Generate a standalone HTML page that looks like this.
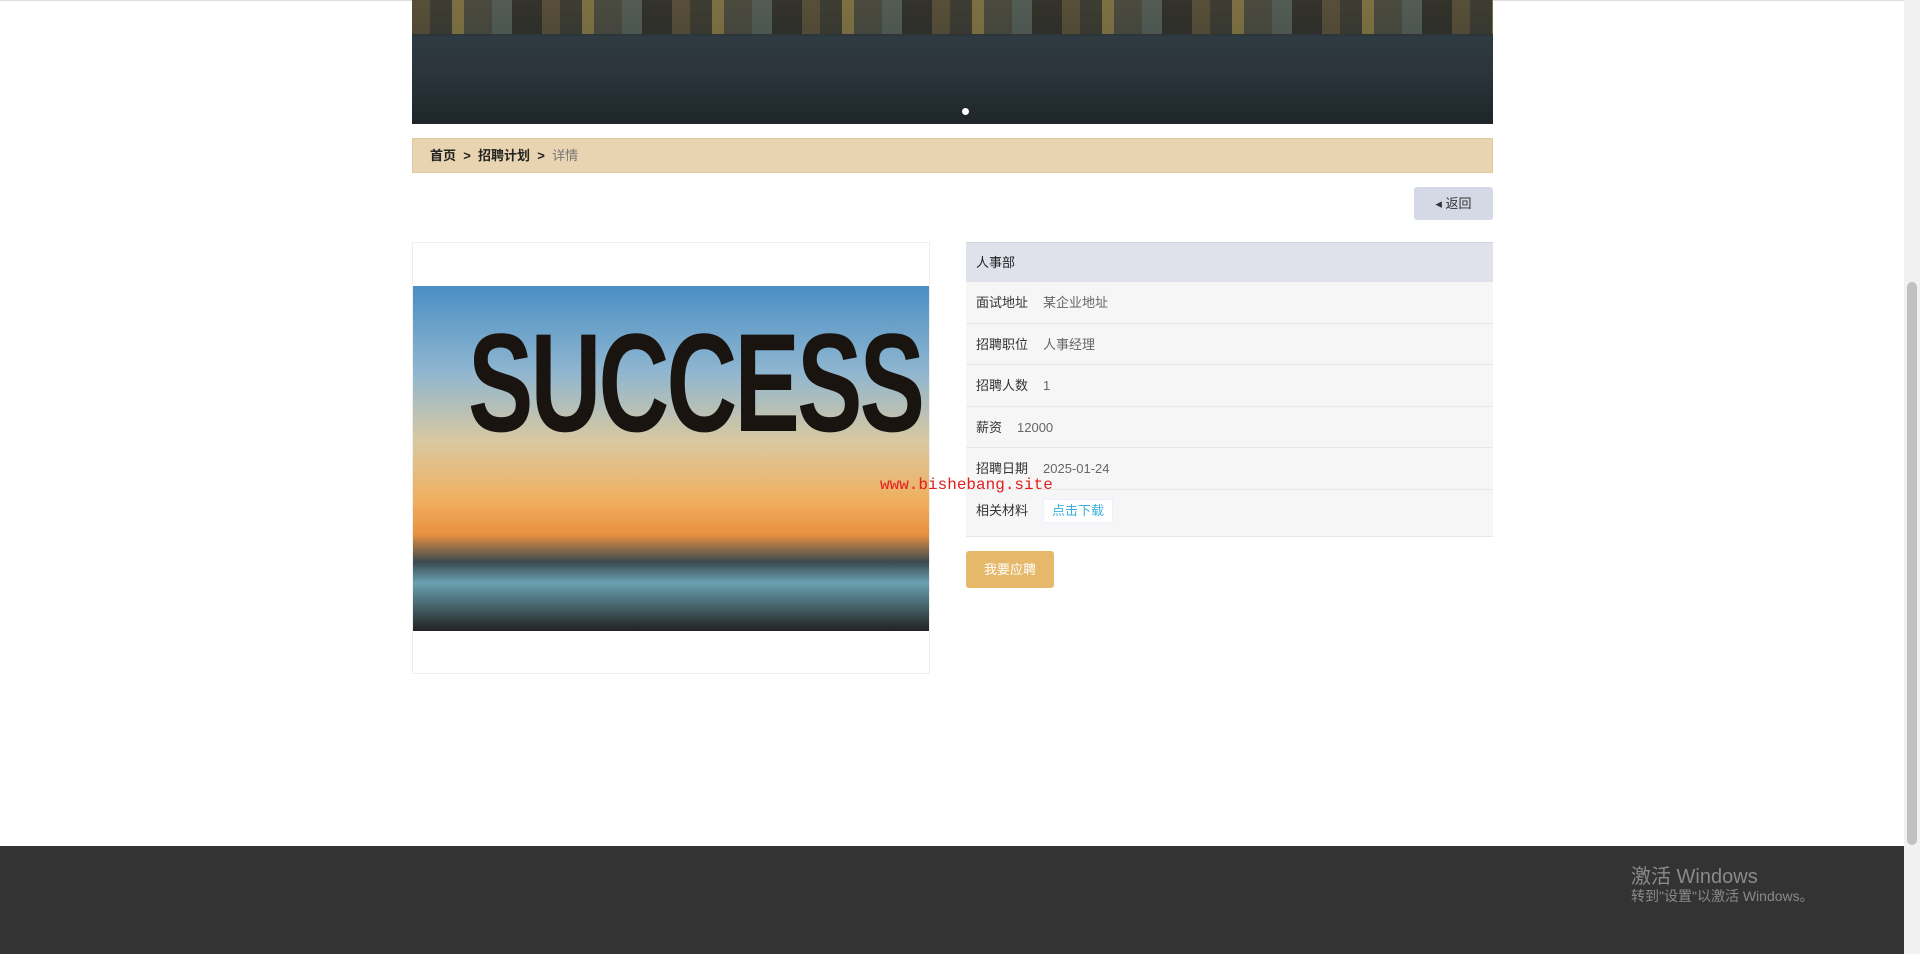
<!DOCTYPE html>
<html><head><meta charset="utf-8"><style>
*{margin:0;padding:0;box-sizing:border-box}
body{width:1920px;height:954px;overflow:hidden;background:#fff;font-family:"Liberation Sans","Noto Sans CJK SC",sans-serif;position:relative}
.abs{position:absolute}
.banner{left:412px;top:0;width:1081px;height:124px;background:linear-gradient(180deg,#4a4a3e 0,#3d3d33 12%,#2a3030 26%,#2f3b42 30%,#2a3439 60%,#1e262b 100%)}
.lights{left:412px;top:0;width:1081px;height:34px;background:repeating-linear-gradient(90deg,#5a5038 0 18px,#3a3a30 18px 40px,#8a7a45 40px 52px,#4b4b40 52px 80px,#55605a 80px 100px,#2e2e28 100px 130px);opacity:.8}
.dot{left:962px;top:108px;width:7px;height:7px;border-radius:50%;background:#fff}
.crumb{left:412px;top:138px;width:1081px;height:35px;background:#e9d4b1;border:1px solid #e0c89f;font-size:13px;line-height:34px;padding-left:17px;color:#222;font-weight:bold}
.crumb span.g{color:#777;font-weight:normal}
.back{left:1414px;top:187px;width:79px;height:33px;background:#d5d9e6;border-radius:3px;font-size:13px;color:#333;line-height:33px;text-align:center}
.card{left:412px;top:242px;width:518px;height:432px;border:1px solid #eee;background:#fff}
.img{left:413px;top:286px;width:516px;height:345px;overflow:hidden;background:linear-gradient(180deg,#4a8fc4 0,#8fb6d0 25%,#d9c8a0 45%,#f0b060 62%,#e89040 72%,#3a4a50 80%,#6aa0b0 86%,#222 100%)}
.succ{position:absolute;left:55px;top:22px;font-size:140px;line-height:150px;font-weight:bold;color:#1a1410;letter-spacing:-4px;font-family:"Liberation Sans",sans-serif;transform:scaleX(.7);transform-origin:left}
.tbl{left:966px;top:242px;width:527px}
.hd{height:40px;background:#dfe2ea;font-size:13px;line-height:40px;padding-left:10px;color:#222;border-top:1px solid #d0d4df}
.row{height:41.5px;background:#f6f6f6;border-bottom:1.5px solid #e8e8e8;font-size:13px;line-height:41px;padding-left:10px;color:#444}
.row b{font-weight:normal;color:#333;margin-right:15px}
.row i{font-style:normal;color:#666}
.dl{display:inline-block;background:#fff;border:1px solid #eef;color:#3ab0d8;font-size:13px;line-height:22px;padding:0 8px;vertical-align:middle}
.apply{left:966px;top:551px;width:88px;height:37px;background:#e6b86a;border-radius:3px;color:#fff;font-size:13px;line-height:37px;text-align:center}
.wm{left:880px;top:476px;color:#e02020;font-family:"Liberation Mono",monospace;font-size:16px}
.foot{left:0;top:846px;width:1904px;height:108px;background:#333}
.win{left:1631px;top:860px;color:#8a8a8a;font-size:20px}
.win2{left:1631px;top:886px;color:#8a8a8a;font-size:14px}
.sb{left:1904px;top:0;width:16px;height:954px;background:#f1f1f1}
.th{left:1907px;top:282px;width:10px;height:563px;background:#c1c1c1;border-radius:5px}
.topline{left:0;top:0;width:1904px;height:1px;background:#ddd}
</style></head><body>
<div class="abs topline"></div>
<div class="abs banner"></div>
<div class="abs lights"></div>
<div class="abs dot"></div>
<div class="abs crumb">首页 &nbsp;&gt;&nbsp; 招聘计划 &nbsp;&gt;&nbsp; <span class="g">详情</span></div>
<div class="abs back">◂ 返回</div>
<div class="abs card"></div>
<div class="abs img"><div class="succ">SUCCESS</div></div>
<div class="abs tbl">
<div class="hd">人事部</div>
<div class="row"><b>面试地址</b><i>某企业地址</i></div>
<div class="row"><b>招聘职位</b><i>人事经理</i></div>
<div class="row"><b>招聘人数</b><i>1</i></div>
<div class="row"><b>薪资</b><i>12000</i></div>
<div class="row"><b>招聘日期</b><i>2025-01-24</i></div>
<div class="row" style="height:47px"><b>相关材料</b><span class="dl">点击下载</span></div>
</div>
<div class="abs apply">我要应聘</div>
<div class="abs wm">www.bishebang.site</div>
<div class="abs foot"></div>
<div class="abs win">激活 Windows</div>
<div class="abs win2">转到"设置"以激活 Windows。</div>
<div class="abs sb"></div>
<div class="abs th"></div>
</body></html>
